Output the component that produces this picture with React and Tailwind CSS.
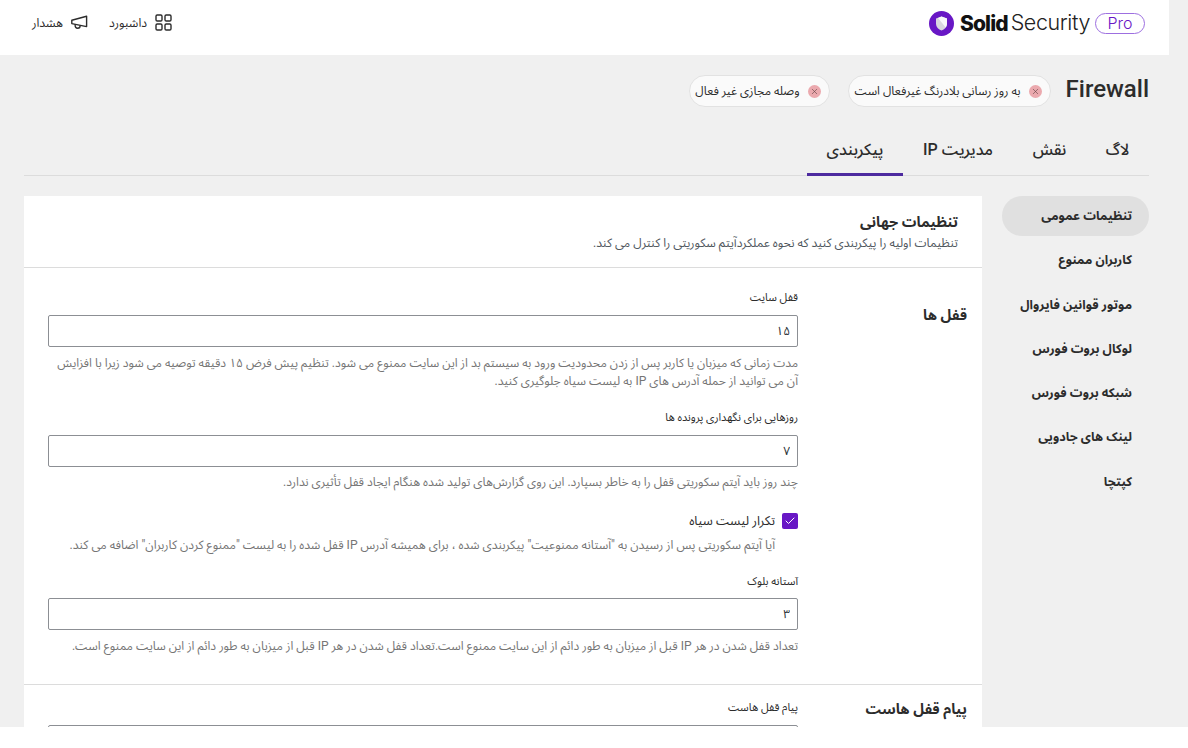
import React from "react";
import { X, Check } from "lucide-react";

function Logo() {
  return (
    <div dir="ltr" className="flex items-center">
      <svg width="25" height="25" viewBox="0 0 25 25" className="mr-[6px]">
        <circle cx="12.5" cy="12.5" r="12.5" fill="#6817c5" />
        <path d="M12.5 5.5 L18 7.5 V12.5 C18 16 15.5 18.5 12.5 19.5 C9.5 18.5 7 16 7 12.5 V7.5 Z" fill="#d9d6df" />
        <path d="M12.5 5.5 L18 7.5 V12.5 C18 14 17.5 15.3 16.7 16.4 L9 7 Z" fill="#f8f7fa" />
      </svg>
      <span className="font-['Inter',sans-serif] text-[21px] font-extrabold tracking-[-0.9px] text-[#111] leading-none">Solid</span>
      <span className="font-['Inter',sans-serif] text-[21.5px] font-light tracking-[-0.4px] text-[#222] leading-none ml-[3px]">Security</span>
      <span className="font-['Inter',sans-serif] ml-[5px] flex h-[21px] w-[50px] items-center justify-center rounded-full border border-[#9d6fe0] text-[16px] font-light text-[#6817c5]">Pro</span>
    </div>
  );
}

function GridIcon() {
  return (
    <svg width="17" height="17" viewBox="0 0 17 17" fill="none" stroke="#2c2c2c" strokeWidth="1.4">
      <rect x="1" y="1" width="6" height="6" rx="1.2" />
      <rect x="10" y="1" width="6" height="6" rx="1.2" />
      <rect x="1" y="10" width="6" height="6" rx="1.2" />
      <rect x="10" y="10" width="6" height="6" rx="1.2" />
    </svg>
  );
}

function HornIcon() {
  return (
    <svg width="17" height="15" viewBox="0 0 17 15" fill="none" stroke="#2c2c2c" strokeWidth="1.4" strokeLinejoin="round">
      <path d="M0.8 5.2 L15.6 1.2 V11.6 L0.8 8.6 Z" />
      <path d="M4.2 9.4 C3.8 12 5 13.2 6.6 13.2 C8.2 13.2 9.2 12.2 9.2 10.4" />
    </svg>
  );
}

function Pill({ children, className }) {
  return (
    <div className={"flex h-[32px] items-center gap-[8px] rounded-full border border-[#e2e2e2] bg-[#fafafa] pr-[8px] text-[12px] text-[#2c2c2c] " + className}>
      <span className="flex size-[13px] items-center justify-center rounded-full bg-[#eba9ae]">
        <X size={9} strokeWidth={1.5} className="text-[#5a3a3d]" />
      </span>
      {children}
    </div>
  );
}

const tabs = [
  ["لاگ", "w-[63px]", false],
  ["نقش", "w-[73px]", false],
  ["مدیریت IP", "w-[110px]", false],
  ["پیکربندی", "w-[96px]", true],
];

const side = ["تنظیمات عمومی", "کاربران ممنوع", "موتور قوانین فایروال", "لوکال بروت فورس", "شبکه بروت فورس", "لینک های جادویی", "کپتچا"];

function Field({ label, value, help, className, labelGap, helpGap }) {
  return (
    <div className={className}>
      <label className="block text-[11px] leading-[16px] text-[#2c2c2c]">{label}</label>
      <input readOnly value={value} className={"block h-[32px] w-full rounded-[2px] border border-[#8c8f94] bg-white px-[7px] text-right text-[12px] text-[#2c3338] " + labelGap} />
      <p className={"text-[12.1px] leading-[18px] text-[#757575] " + helpGap}>{help}</p>
    </div>
  );
}

export default function App() {
  return (
    <div dir="rtl" className="font-['Roboto','Noto_Sans_Arabic',sans-serif]">
      <div className="h-[727px] overflow-hidden bg-[#f0f0f0]">
        <header className="mr-[19px] flex h-[55px] items-center justify-between bg-white pr-[24px] pl-[32px]">
          <div className="mt-[-9px]"><Logo /></div>
          <div className="mt-[-9px] flex items-center gap-[21px] text-[12.15px] text-[#2c2c2c]">
            <span className="flex items-center gap-[8px]">
              <GridIcon />
              داشبورد
            </span>
            <span className="flex items-center gap-[8px]">
              <HornIcon />
              هشدار
            </span>
          </div>
        </header>

        <div className="mr-[39px] ml-[39px] mt-[20px] flex items-center">
          <h1 dir="ltr" className="-mt-[4px] text-[24px] leading-[32px] font-medium text-[#2c2c2c]">Firewall</h1>
          <Pill className="mr-[15px] w-[203px]">به روز رسانی بلادرنگ غیرفعال است</Pill>
          <Pill className="mr-[18px] w-[141px]">وصله مجازی غیر فعال</Pill>
        </div>

        <div className="mr-[39px] ml-[24px] mt-[27px] flex h-[42px] border-b border-[#dcdcdc]">
          {tabs.map(([t, w, active]) => (
            <div key={t} className={"flex h-[42px] items-start justify-center pt-[4px] text-[16px] font-medium text-[#2c2c2c] " + w + (active ? " border-b-[3px] border-[#4d2a9f]" : "")}>
              {t}
            </div>
          ))}
        </div>

        <div className="mr-[39px] mt-[20px] flex gap-[20px]">
          <nav className="w-[147px] shrink-0">
            {side.map((s, i) => (
              <div key={s} className={"mb-[4.25px] flex h-[40px] items-center rounded-full pt-[1px] pr-[17px] text-[12.6px] font-bold text-[#2c2c2c] " + (i === 0 ? "bg-[#e0e0e0]" : "")}>
                {s}
              </div>
            ))}
          </nav>

          <main className="w-[958px] shrink-0 bg-white">
            <div className="h-[72px] border-b border-[#dcdcdc] pt-[15px] pr-[24px]">
              <h2 className="text-[14.5px] leading-[23px] font-bold text-[#2c2c2c]">تنظیمات جهانی</h2>
              <p className="text-[12.15px] leading-[18px] text-[#50575e]">تنظیمات اولیه را پیکربندی کنید که نحوه عملکردآیتم سکوریتی را کنترل می کند.</p>
            </div>

            <section className="flex border-b border-[#dcdcdc] pb-[29px]">
              <h3 className="mt-[36px] w-[184px] shrink-0 pr-[15px] text-[14.5px] leading-[24px] font-bold text-[#2c2c2c]">قفل ها</h3>
              <div className="w-[750px] pt-[22px]">
                <Field
                  label="قفل سایت"
                  value="۱۵"
                  labelGap="mt-[9px]"
                  helpGap="mt-[7px]"
                  help="مدت زمانی که میزبان یا کاربر پس از زدن محدودیت ورود به سیستم بد از این سایت ممنوع می شود. تنظیم پیش فرض ۱۵ دقیقه توصیه می شود زیرا با افزایش آن می توانید از حمله آدرس های IP به لیست سیاه جلوگیری کنید."
                />
                <Field
                  className="mt-[20px]"
                  label="روزهایی برای نگهداری پرونده ها"
                  value="۷"
                  labelGap="mt-[9px]"
                  helpGap="mt-[6px]"
                  help="چند روز باید آیتم سکوریتی قفل را به خاطر بسپارد. این روی گزارش‌های تولید شده هنگام ایجاد قفل تأثیری ندارد."
                />
                <div className="mt-[20px]">
                  <label className="flex items-center gap-[7px] text-[12.8px] leading-[20px] text-[#2c2c2c]">
                    <span className="flex size-[16px] items-center justify-center rounded-[2px] bg-[#6817c5]">
                      <Check size={12} strokeWidth={2} className="text-white" />
                    </span>
                    تکرار لیست سیاه
                  </label>
                  <p className="mt-[5px] pr-[23px] text-[12.15px] leading-[18px] text-[#757575]">آیا آیتم سکوریتی پس از رسیدن به "آستانه ممنوعیت" پیکربندی شده ، برای همیشه آدرس IP قفل شده را به لیست "ممنوع کردن کاربران" اضافه می کند.</p>
                </div>
                <Field
                  className="mt-[20px]"
                  label="آستانه بلوک"
                  value="۳"
                  labelGap="mt-[8px]"
                  helpGap="mt-[7px]"
                  help="تعداد قفل شدن در هر IP قبل از میزبان به طور دائم از این سایت ممنوع است.تعداد قفل شدن در هر IP قبل از میزبان به طور دائم از این سایت ممنوع است."
                />
              </div>
            </section>

            <section className="flex">
              <h3 className="mt-[13px] w-[184px] shrink-0 pr-[15px] text-[14.5px] leading-[24px] font-bold text-[#2c2c2c]">پیام قفل هاست</h3>
              <div className="w-[750px] pt-[15px]">
                <label className="block text-[11px] leading-[16px] text-[#2c2c2c]">پیام قفل هاست</label>
                <div className="mt-[9px] h-[60px] rounded-[2px] border border-[#8c8f94]" />
              </div>
            </section>
          </main>
        </div>
      </div>
    </div>
  );
}
